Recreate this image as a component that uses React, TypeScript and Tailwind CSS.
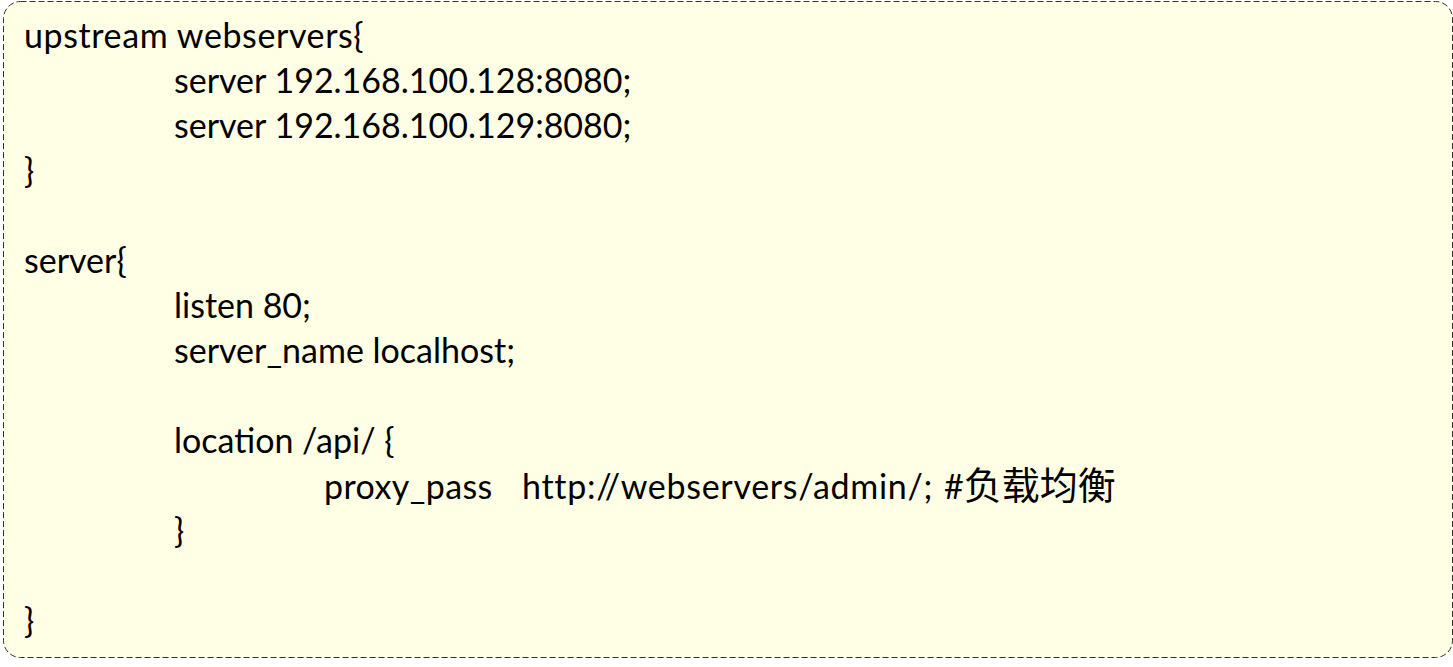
const lines: { indent: number; text: string }[] = [
  { indent: 0, text: "upstream webservers{" },
  { indent: 1, text: "server 192.168.100.128:8080;" },
  { indent: 1, text: "server 192.168.100.129:8080;" },
  { indent: 0, text: "}" },
  { indent: 0, text: "" },
  { indent: 0, text: "server{" },
  { indent: 1, text: "listen 80;" },
  { indent: 1, text: "server_name localhost;" },
  { indent: 0, text: "" },
  { indent: 1, text: "location /api/ {" },
  { indent: 2, text: "proxy" },
  { indent: 1, text: "}" },
  { indent: 0, text: "" },
  { indent: 0, text: "}" },
];

const indentClass = ["pl-0", "pl-[150px]", "pl-[300px]"];

const ProxyLine = () => (
  <>
    <span className="inline-block w-[198px] tracking-[0.4px]">proxy_pass</span>
    <span className="inline-block w-[422px] tracking-[0.7px]">
      http://webservers/admin/;
    </span>
    <span>#</span>
    <span className="text-[38px]">负载均衡</span>
  </>
);

export default function App() {
  return (
    <div className="h-[667px] w-[1453px] bg-white pl-[3px] pt-px">
      <div className="relative h-[657px] w-[1450px] rounded-[17px] bg-[#ffffe5] pl-[21px] pt-[11px] font-['Lato','Noto_Sans_CJK_SC',sans-serif] text-[34px] leading-[45px] text-black">
        <svg
          className="pointer-events-none absolute inset-0"
          width="1450"
          height="657"
        >
          <rect
            x="0.5"
            y="0.5"
            width="1449"
            height="656"
            rx="17"
            fill="none"
            stroke="#2f2f2f"
            strokeWidth="1"
            strokeDasharray="6 3"
          />
        </svg>
        {lines.map((line, i) => (
          <div
            key={i}
            className={`h-[45px] whitespace-pre ${indentClass[line.indent]} ${i === 0 ? "tracking-[0.6px]" : ""}`}
          >
            {line.text === "proxy" ? <ProxyLine /> : line.text}
          </div>
        ))}
      </div>
    </div>
  );
}
